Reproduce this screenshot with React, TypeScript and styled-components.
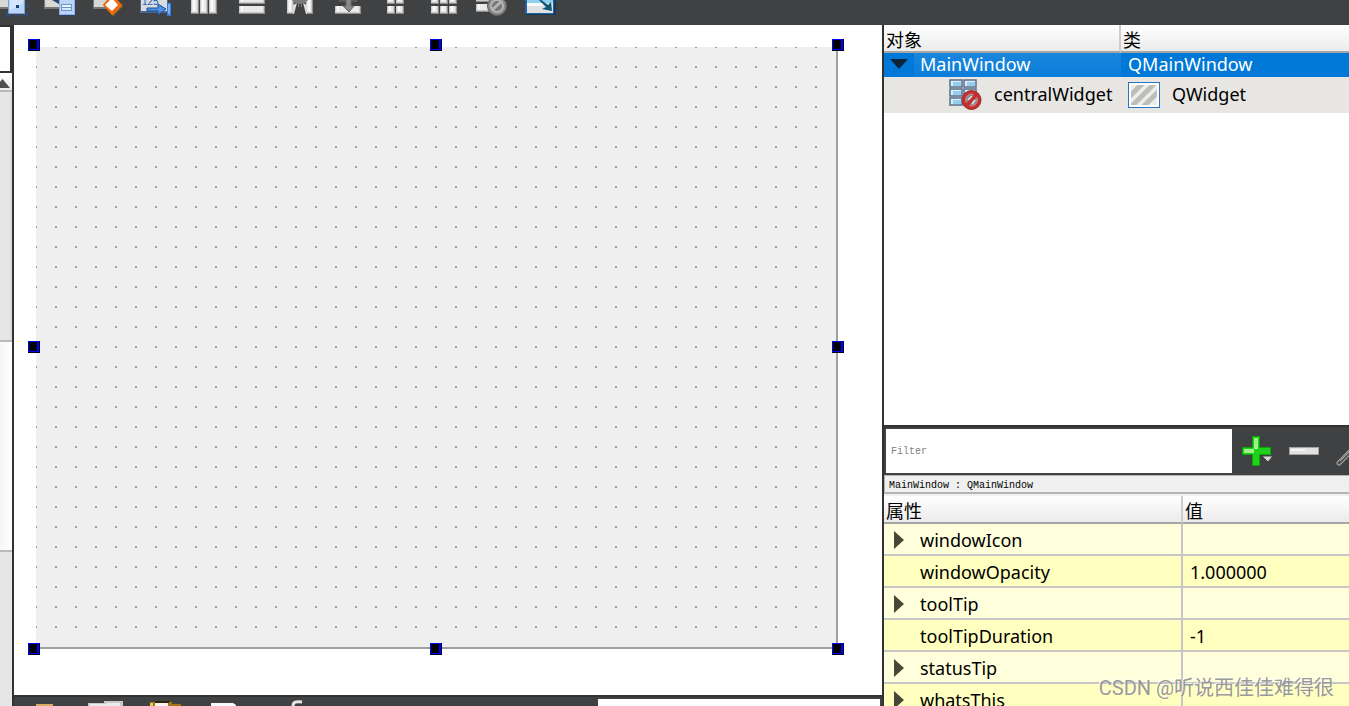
import React from "react";
import styled, { createGlobalStyle } from "styled-components";

const uiFont = `"Noto Sans", "Noto Sans CJK SC", sans-serif`;
const monoFont = `"Liberation Mono", "Noto Sans CJK SC", monospace`;
const chrome = "#404142";
const edge = "#323232";

const GlobalStyle = createGlobalStyle`
  * { box-sizing: border-box; }
  body { margin: 0; background: #fff; color: #000; font-family: ${uiFont}; font-size: 18px; }
`;

const Page = styled.div`
  position: relative;
  display: flex;
  flex-direction: column;
  height: 100vh;
  overflow: hidden;
`;

const Toolbar = styled.header`
  display: flex;
  flex: none;
  height: 25px;
  background: ${chrome};
  overflow: hidden;
`;

const ToolButton = styled.button<{ $lead?: boolean }>`
  flex: none;
  width: 48px;
  height: 25px;
  margin: 0 0 0 ${(p) => (p.$lead ? "-12px" : "0")};
  padding: 0;
  border: 0;
  background: none;
  svg { display: block; }
`;

const Workspace = styled.div`
  display: grid;
  flex: 1;
  min-height: 0;
  grid-template-columns: 14px minmax(0, 1fr) 467px;
`;

const LeftStrip = styled.aside`
  display: flex;
  flex-direction: column;
  border-right: 2px solid ${edge};
  background: #e6e6e6;
`;

const StripField = styled.div`
  height: 48px;
  border: 2px solid ${edge};
  border-left: 0;
  background: #fff;
`;

const ScrollUp = styled.button`
  height: 19px;
  padding: 0;
  border: 0;
  border-bottom: 2px solid #b9b9b9;
  background: linear-gradient(#fff, #ececec);
  svg { display: block; }
`;

const Track = styled.div`
  height: 248px;
  border-right: 2px solid #dcdcdc;
`;

const Thumb = styled.div`
  height: 212px;
  border: solid #b9b9b9;
  border-width: 2px 0;
  background: linear-gradient(90deg, #f6f6f6, #fff);
`;

const Center = styled.main`
  display: flex;
  flex-direction: column;
  min-width: 0;
`;

const Canvas = styled.section`
  flex: 1;
  min-height: 0;
  padding: 22px;
  background: #fff;
  overflow: hidden;
`;

const FormWindow = styled.div`
  position: relative;
  width: 802px;
  height: 602px;
  padding: 0 1px 1px 0;
  border: solid #a0a0a0;
  border-width: 0 2px 2px 0;
  background:
    conic-gradient(from 270deg at 2px 2px, #a0a0a0 90deg, transparent 0) -1px -1px / 20px 20px content-box,
    linear-gradient(#efefef, #efefef) padding-box;
`;

const Handle = styled.span<{ $col: number; $row: number }>`
  position: absolute;
  left: ${(p) => p.$col * 402 - 8}px;
  top: ${(p) => p.$row * 302 - 8}px;
  width: 12px;
  height: 12px;
  border: solid #000020;
  border-width: 0 1px 1px 0;
  background: #00f;
  &::after {
    content: "";
    display: block;
    width: 8px;
    height: 9px;
    margin: 1px;
    background: #000;
  }
`;

const BottomDock = styled.div`
  display: flex;
  flex: none;
  justify-content: space-between;
  height: 11px;
  border-top: 2px solid ${edge};
  background: ${chrome};
  overflow: hidden;
  svg { display: block; flex: none; }
`;

const DockField = styled.div`
  width: 284px;
  height: 9px;
  border: solid ${chrome};
  border-width: 2px 2px 0 0;
  background: #fff;
`;

const Sidebar = styled.aside`
  display: flex;
  flex-direction: column;
  min-width: 0;
  border-left: 2px solid ${edge};
  overflow: hidden;
`;

const TreePanel = styled.section`
  flex: none;
  height: 400px;
  background: #fff;
`;

const Grid = styled.table`
  width: 100%;
  border-collapse: separate;
  border-spacing: 0;
  table-layout: fixed;
  line-height: 22px;
`;

const Head = styled.th<{ $width?: number; $rule?: boolean }>`
  width: ${(p) => (p.$width ? `${p.$width}px` : "auto")};
  height: 28px;
  padding: 4px 2px 0;
  border-bottom: 2px solid #a6a6a6;
  border-right: ${(p) => (p.$rule ? "2px solid #cdcdcd" : "0")};
  background: linear-gradient(#fff, #ebebeb);
  box-shadow: 0 1px 0 #dfe6ec;
  font-weight: 400;
  text-align: left;
  white-space: nowrap;
`;

const TreeRow = styled.tr<{ $selected?: boolean }>`
  height: ${(p) => (p.$selected ? 24 : 36)}px;
  color: ${(p) => (p.$selected ? "#fff" : "#000")};
  background: ${(p) => (p.$selected ? "#0078d7" : "#e8e6e3")};
`;

const TreeCell = styled.td<{ $indent: number; $lit?: boolean }>`
  padding: 0 0 0 ${(p) => p.$indent}px;
  background: ${(p) =>
    p.$lit ? "linear-gradient(#1a86dc, #0b7ddb) 30px 0 no-repeat" : "none"};
  white-space: nowrap;
`;

const TreeText = styled.span`
  display: block;
  padding-bottom: 2px;
`;

const Label = styled.div`
  display: flex;
  align-items: center;
  gap: 12px;
  svg { display: block; flex: none; }
`;

const FilterBar = styled.div`
  display: flex;
  flex: none;
  height: 50px;
  padding: 2px 0 2px 2px;
  border-top: 2px solid ${edge};
  background: ${chrome};
  overflow: hidden;
`;

const FilterInput = styled.input`
  flex: 1;
  min-width: 0;
  height: 44px;
  padding: 0 5px;
  border: 0;
  border-radius: 0;
  background: #fff;
  font: 10px ${monoFont};
  &::placeholder { color: #808080; opacity: 1; }
`;

const FilterButton = styled.button<{ $width: number }>`
  flex: none;
  width: ${(p) => p.$width}px;
  padding: 0;
  border: 0;
  background: none;
  overflow: hidden;
  svg { display: block; }
`;

const ObjectName = styled.div`
  flex: none;
  height: 19px;
  margin-bottom: 2px;
  padding: 3px 4px 0;
  border: solid #b4b4b4;
  border-width: 1px 0 2px 1px;
  background: #f0f0f0;
  font: 10px/14px ${monoFont};
  white-space: pre;
`;

const PropertyPanel = styled.section`
  flex: none;
  background: #f0f0f0;
`;

const PropertyRow = styled.tr<{ $deep: boolean }>`
  height: 32px;
  background: ${(p) => (p.$deep ? "#ffffbf" : "#ffffdc")};
`;

const PropertyCell = styled.td<{ $name?: boolean }>`
  padding: 2px 0 0 ${(p) => (p.$name ? 9 : 7)}px;
  border-bottom: 2px solid #c6c6c6;
  border-right: ${(p) => (p.$name ? "2px solid #c6c6c6" : "0")};
  white-space: nowrap;
`;

const Expander = styled.span`
  flex: none;
  width: 15px;
  height: 18px;
  svg { display: block; }
`;

const Watermark = styled.div`
  position: absolute;
  right: 15px;
  bottom: 3px;
  color: rgba(140, 140, 140, 0.9);
  font: 20px/30px Roboto, "Noto Sans CJK SC", sans-serif;
  text-shadow: -1px -1px 0 rgba(255, 255, 255, 0.8);
  white-space: nowrap;
`;

const Block = ({ x, y, w, h }: { x: number; y: number; w: number; h: number }) => (
  <g>
    <rect x={x} y={y} width={w} height={h} fill="#8f8f8f" />
    <rect x={x} y={y} width={w - 1} height={h - 1} fill="#c9c9c9" />
    <rect x={x + 1} y={y} width={w - 3} height={h - 2} fill="#e9e9e9" />
    <rect x={x + 2} y={y} width={2} height={h - 3} fill="#f8f8f8" />
  </g>
);

const PageCorner = ({ x, w }: { x: number; w: number }) => (
  <g>
    <rect x={x} y="-4" width={w} height="13" fill="#777" />
    <rect x={x + 1} y="-4" width={w - 2} height="11" fill="#d8d8d4" />
  </g>
);

const tools: { name: string; art: React.ReactNode }[] = [
  {
    name: "Edit Widgets",
    art: (
      <>
        <PageCorner x={10} w={12} />
        <rect x="20" y="-4" width="17" height="18" fill="#7f9fcc" />
        <rect x="21" y="-4" width="15" height="17" fill="#b9d5fb" />
        <path d="M22 0h13v3l-13 7z" fill="#d3e5ff" />
        <rect x="28" y="5" width="3" height="3" fill="#15427e" />
        <path d="M19.5 12v4h4M27 15.500h4M35 15.500h4v-4M39.500 4v4" fill="none" stroke="#274f8c" strokeWidth="1.500" />
      </>
    ),
  },
  {
    name: "Edit Signals/Slots",
    art: (
      <>
        <PageCorner x={8} w={18} />
        <path d="M16 0l7 4v-4z" fill="#28456f" />
        <rect x="23" y="-2" width="17" height="18" fill="#2f4261" />
        <rect x="23" y="-2" width="16" height="17" fill="#8db1e2" />
        <rect x="24" y="-2" width="14" height="16" fill="#bcd5f6" />
        <rect x="25" y="4" width="11" height="7" fill="#6b95cd" />
        <rect x="26" y="5" width="9" height="2" fill="#eef5ff" />
        <rect x="26" y="8" width="9" height="2" fill="#dce9fa" />
      </>
    ),
  },
  {
    name: "Edit Buddies",
    art: (
      <>
        <PageCorner x={9} w={15} />
        <path d="M28-6l11 12-10 10-10-11z" fill="#a66a24" />
        <path d="M28-6l10 11-10 10-9-10z" fill="#f3670c" />
        <path d="M28-2l6 7-6 6-7-6z" fill="#fff" />
      </>
    ),
  },
  {
    name: "Edit Tab Order",
    art: (
      <>
        <rect x="8" y="-4" width="28" height="17" fill="#4d678b" />
        <rect x="9" y="-4" width="26" height="15" fill="#dadde0" />
        <text x="10" y="5" fontFamily="Liberation Sans, sans-serif" fontSize="10" fill="#165bb5">125</text>
        <path d="M15 8h11v-4l8 5-8 6v-4h-11z" fill="#4f8ee0" stroke="#174e9b" />
        <rect x="35" y="3" width="4" height="13" fill="#347de1" />
        <rect x="36" y="4" width="2" height="10" fill="#7db2f7" />
      </>
    ),
  },
  {
    name: "Lay Out Horizontally",
    art: (
      <>
        <Block x={11} y={-2} w={8} h={16} />
        <Block x={20} y={-2} w={8} h={16} />
        <Block x={29} y={-2} w={8} h={16} />
      </>
    ),
  },
  {
    name: "Lay Out Vertically",
    art: (
      <>
        <Block x={11} y={-4} w={26} h={8} />
        <Block x={11} y={6} w={26} h={8} />
      </>
    ),
  },
  {
    name: "Lay Out Horizontally in Splitter",
    art: (
      <>
        <Block x={11} y={-2} w={7} h={16} />
        <Block x={30} y={-2} w={7} h={16} />
        <path d="M17 5l4-2-3 11h-1zM31 5l-4-2 3 11h1z" fill="#dcdcdc" />
        <path d="M15-1h18l-4 4h-3v4h-1v-3h-2v3h-1v-4h-3z" fill="#7d7d7d" />
      </>
    ),
  },
  {
    name: "Lay Out Vertically in Splitter",
    art: (
      <>
        <Block x={11} y={6} w={26} h={8} />
        <path d="M15 1h18" stroke="#777" />
        <path d="M22-2h5v8h3l-5 6-6-6h3z" fill="#898989" stroke="#666" />
      </>
    ),
  },
  {
    name: "Lay Out in a Form Layout",
    art: (
      <>
        <Block x={15} y={-4} w={8} h={8} />
        <Block x={24} y={-4} w={8} h={8} />
        <Block x={15} y={6} w={8} h={8} />
        <Block x={24} y={6} w={8} h={8} />
      </>
    ),
  },
  {
    name: "Lay Out in a Grid",
    art: (
      <>
        {[11, 20, 29].map((x) => (
          <g key={x}>
            <Block x={x} y={-4} w={8} h={8} />
            <Block x={x} y={6} w={8} h={8} />
          </g>
        ))}
      </>
    ),
  },
  {
    name: "Break Layout",
    art: (
      <>
        <Block x={8} y={-4} w={15} h={6} />
        <Block x={8} y={4} w={15} h={8} />
        <circle cx="29" cy="6" r="9.500" fill="#8a8a8a" stroke="#5f5f5f" />
        <circle cx="29" cy="6" r="6" fill="#777" stroke="#b4b4b4" strokeWidth="2" />
        <path d="M24 10l10-9" stroke="#b4b4b4" strokeWidth="3" />
      </>
    ),
  },
  {
    name: "Adjust Size",
    art: (
      <>
        <rect x="9" y="-4" width="31" height="19" fill="#173b5b" />
        <rect x="9" y="-4" width="29" height="18" fill="#1c64a8" />
        <rect x="11" y="-4" width="26" height="17" fill="#e0e2e2" />
        <path d="M11-4h26v7h-26z" fill="#8fd0ec" />
        <path d="M11 3h20l-6 3h-14z" fill="#fafafa" />
        <path d="M24-1l8 6 3-3 1 9-10-2 4-2-7-7z" fill="#0e5877" />
      </>
    ),
  },
];

const BrokenLayoutIcon = () => (
  <svg width="33" height="34" viewBox="0 0 33 34" aria-hidden="true">
    {[2, 11, 20].map((y) => (
      <g key={y}>
        {[1, 15].map((x) => (
          <g key={x}>
            <rect x={x} y={y} width="12" height="7" fill="#d9effb" stroke="#5a6e8c" strokeWidth="1.500" />
            <rect x={x + 3} y={y + 2} width="8" height="4" fill="#94cdee" />
          </g>
        ))}
      </g>
    ))}
    <circle cx="22.500" cy="22" r="9.500" fill="#c62f2f" stroke="#97312e" />
    <circle cx="22.500" cy="22" r="6" fill="#87909a" stroke="#e47670" />
    <path d="M18 27l9-10" stroke="#c62f2f" strokeWidth="4" />
    <path d="M19 22l4-4M23 26l3-4" stroke="#dfe4e8" strokeWidth="1.500" />
  </svg>
);

const WidgetIcon = () => (
  <svg width="32" height="26" viewBox="0 0 32 26" aria-hidden="true">
    <rect x=".5" y=".5" width="31" height="25" fill="#fff" stroke="#2a72c3" />
    <svg x="3" y="3" width="26" height="20" viewBox="0 0 26 20">
      <rect width="26" height="20" fill="#ededeb" />
      <path d="M-4 14L12-2M-1 23L23-1M11 23L31 3" stroke="#bdbdbb" strokeWidth="5" />
    </svg>
  </svg>
);

const properties = [
  { name: "windowIcon", value: "", expandable: true },
  { name: "windowOpacity", value: "1.000000", expandable: false },
  { name: "toolTip", value: "", expandable: true },
  { name: "toolTipDuration", value: "-1", expandable: false },
  { name: "statusTip", value: "", expandable: true },
  { name: "whatsThis", value: "", expandable: true },
];

const steps = [0, 1, 2];

export default function App() {
  return (
    <Page>
      <GlobalStyle />
      <Toolbar>
        {tools.map((tool, i) => (
          <ToolButton key={tool.name} aria-label={tool.name} $lead={i === 0}>
            <svg width="48" height="25" viewBox="0 0 48 25">{tool.art}</svg>
          </ToolButton>
        ))}
      </Toolbar>
      <Workspace>
        <LeftStrip>
          <StripField />
          <ScrollUp aria-label="Scroll up">
            <svg width="12" height="17" viewBox="0 0 12 17">
              <path d="M-6 15L2.500 6 10 15z" fill="#505050" />
            </svg>
          </ScrollUp>
          <Track />
          <Thumb />
        </LeftStrip>
        <Center>
          <Canvas>
            <FormWindow>
              {steps.flatMap((row) =>
                steps
                  .filter((col) => !(row === 1 && col === 1))
                  .map((col) => <Handle key={`${row}-${col}`} $col={col} $row={row} />)
              )}
            </FormWindow>
          </Canvas>
          <BottomDock>
            <svg width="300" height="9" viewBox="0 0 300 9" aria-hidden="true">
              <path d="M22 7h17v2h-17z" fill="#d6ab61" />
              <path d="M74 6h16v-2h19v5h-35z" fill="#c9c9c9" />
              <path d="M76 7h16v-1h14v3h-30z" fill="#ececec" />
              <path d="M136 5h22v2h9v2h-31z" fill="#a87413" />
              <path d="M141 4h14v2h-14z" fill="#32240c" />
              <path d="M141 6h13v3h-13z" fill="#f4f4f0" />
              <path d="M136 6h3v3h-3z" fill="#f1c749" />
              <path d="M197 6h22l3 2v1h-25z" fill="#fafafa" />
              <path d="M279 9c0-4 3-5 9-4" fill="none" stroke="#e6e6e6" strokeWidth="3" />
            </svg>
            <DockField />
          </BottomDock>
        </Center>
        <Sidebar>
          <TreePanel>
            <Grid>
              <thead>
                <tr>
                  <Head $width={237} $rule>对象</Head>
                  <Head>类</Head>
                </tr>
              </thead>
              <tbody>
                <TreeRow $selected>
                  <TreeCell $indent={6} $lit>
                    <Label>
                      <svg width="18" height="12" viewBox="0 0 18 12" aria-hidden="true">
                        <path d="M0 0h18l-9 10z" fill="#0a2338" />
                      </svg>
                      <TreeText>MainWindow</TreeText>
                    </Label>
                  </TreeCell>
                  <TreeCell $indent={7}>
                    <TreeText>QMainWindow</TreeText>
                  </TreeCell>
                </TreeRow>
                <TreeRow>
                  <TreeCell $indent={65}>
                    <Label>
                      <BrokenLayoutIcon />
                      <TreeText>centralWidget</TreeText>
                    </Label>
                  </TreeCell>
                  <TreeCell $indent={7}>
                    <Label>
                      <WidgetIcon />
                      <TreeText>QWidget</TreeText>
                    </Label>
                  </TreeCell>
                </TreeRow>
              </tbody>
            </Grid>
          </TreePanel>
          <FilterBar>
            <FilterInput placeholder="Filter" aria-label="Filter" />
            <FilterButton $width={48} aria-label="Add property">
              <svg width="48" height="44" viewBox="0 0 48 44">
                <path d="M20 7h8v11h11v8h-11v11h-8v-11h-10v-8h10z" fill="#08a608" />
                <path d="M21 8h6v11h11v6h-11v11h-6v-11h-10v-6h10z" fill="#1fd21c" />
                <path d="M22 9h4v11h-4v4h-10v-4h10z" fill="#a0f08b" />
                <path d="M30 27h11l-5 6z" fill="#d8d8d8" stroke="#404142" />
              </svg>
            </FilterButton>
            <FilterButton $width={48} aria-label="Remove property">
              <svg width="48" height="44" viewBox="0 0 48 44">
                <rect x="9" y="18" width="30" height="8" fill="#a5a5a5" />
                <rect x="10" y="19" width="28" height="6" fill="#e2e2e2" />
                <rect x="11" y="20" width="14" height="2" fill="#f5f5f5" />
              </svg>
            </FilterButton>
            <FilterButton $width={21} aria-label="Configure">
              <svg width="21" height="44" viewBox="0 0 21 44">
                <path d="M11 34L25 20" stroke="#aaa" strokeWidth="5" strokeLinecap="round" />
                <path d="M11 34L25 20" stroke="#505050" strokeWidth="3" strokeLinecap="round" />
                <path d="M12 32L24 20" stroke="#b5b5b5" strokeWidth="1" />
              </svg>
            </FilterButton>
          </FilterBar>
          <PropertyPanel>
            <ObjectName>MainWindow : QMainWindow</ObjectName>
            <Grid>
              <thead>
                <tr>
                  <Head $width={299} $rule>属性</Head>
                  <Head>值</Head>
                </tr>
              </thead>
              <tbody>
                {properties.map((p, i) => (
                  <PropertyRow key={p.name} $deep={i % 2 === 1}>
                    <PropertyCell $name>
                      <Label>
                        <Expander>
                          {p.expandable && (
                            <svg width="15" height="18" viewBox="0 0 15 18" aria-hidden="true">
                              <path d="M1 0l10 9-10 9z" fill="#484838" />
                            </svg>
                          )}
                        </Expander>
                        {p.name}
                      </Label>
                    </PropertyCell>
                    <PropertyCell>{p.value}</PropertyCell>
                  </PropertyRow>
                ))}
              </tbody>
            </Grid>
          </PropertyPanel>
        </Sidebar>
      </Workspace>
      <Watermark>CSDN @听说西佳佳难得很</Watermark>
    </Page>
  );
}
